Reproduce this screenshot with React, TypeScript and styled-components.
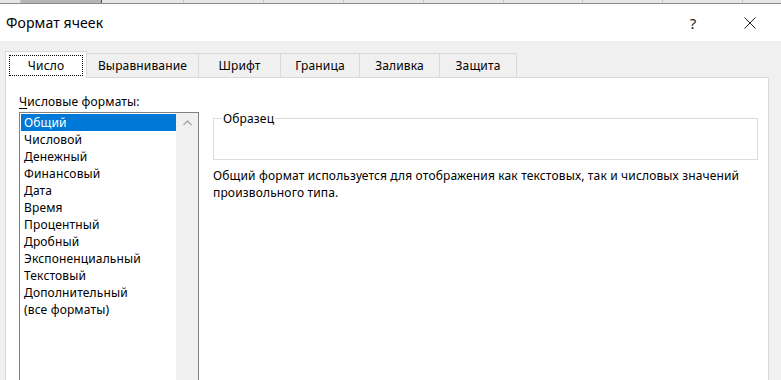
import styled, { createGlobalStyle } from 'styled-components'

const GlobalStyle = createGlobalStyle`
body {
  margin: 0;
  font-family: "Noto Sans", "Liberation Sans", sans-serif;
  color: #000;
}
`

const Window = styled.div`
width: 781px;
height: 380px;
overflow: hidden;
display: flex;
flex-direction: column;
background: #f0f0f0;
`

const SheetHeader = styled.div`
display: flex;
height: 3px;
flex-shrink: 0;
background: #e6e6e6;
border-bottom: 1px solid #8c8c8c;
`

const SheetCol = styled.div<{ $w: number; $active?: boolean }>`
width: ${p => p.$w}px;
flex-shrink: 0;
background: ${p => (p.$active ? '#b4b4b4' : '#e6e6e6')};
border-right: 1px solid ${p => (p.$active ? '#217346' : '#c8c8c8')};
`

const TitleBar = styled.div`
height: 37px;
flex-shrink: 0;
background: #fff;
display: flex;
align-items: center;
padding-left: 6px;
`

const Title = styled.div`
flex: 1;
font-size: 14px;
letter-spacing: 0.1px;
`

const HelpButton = styled.div`
width: 20px;
font-size: 15px;
text-align: center;
color: #222;
margin-right: 27px;
`

const CloseButton = styled.div`
width: 40px;
display: flex;
justify-content: center;
margin-right: 11px;
`

const Body = styled.div`
flex: 1;
display: flex;
flex-direction: column;
padding: 9px 12px 0 5px;
`

const TabRow = styled.div`
display: flex;
align-items: flex-end;
height: 27px;
`

const Tab = styled.div<{ $w: number; $active?: boolean }>`
width: ${p => p.$w}px;
height: ${p => (p.$active ? 27 : 24)}px;
box-sizing: border-box;
display: flex;
align-items: center;
justify-content: center;
font-size: 12px;
letter-spacing: 0.15px;
background: ${p => (p.$active ? '#fff' : '#f0f0f0')};
border: 1px solid #d9d9d9;
border-bottom: none;
border-left: ${p => (p.$active ? '1px solid #d9d9d9' : 'none')};
position: relative;
z-index: ${p => (p.$active ? 1 : 0)};
margin-bottom: ${p => (p.$active ? -1 : 0)}px;
`

const FocusRect = styled.span`
border: 1px dotted #000;
padding: 1px 18px;
`

const Panel = styled.div`
flex: 1;
background: #fff;
border: 1px solid #d9d9d9;
border-bottom: none;
display: grid;
grid-template-columns: 180px 545px;
column-gap: 14px;
padding: 15px 12px 0 13px;
letter-spacing: 0.15px;
`

const LeftCol = styled.div`
display: flex;
flex-direction: column;
`

const Label = styled.div`
font-size: 12px;
line-height: 17px;
& u {
  text-decoration: underline;
  text-underline-offset: 2px;
}
`

const ListBox = styled.div`
margin-top: 2px;
height: 300px;
border: 1px solid #828282;
display: flex;
padding: 1px 0 0 1px;
`

const Items = styled.div`
flex: 1;
`

const Item = styled.div<{ $selected?: boolean }>`
height: 17px;
line-height: 17px;
font-size: 12px;
padding-left: 3px;
background: ${p => (p.$selected ? '#0078d7' : 'transparent')};
color: ${p => (p.$selected ? '#fff' : '#000')};
`

const ScrollBar = styled.div`
width: 22px;
margin-top: -1px;
background: #f0f0f0;
display: flex;
justify-content: center;
padding-top: 7px;
`

const RightCol = styled.div`
padding-top: 17px;
`

const GroupBox = styled.fieldset`
margin: 0;
height: 50px;
box-sizing: border-box;
border: 1px solid #dcdcdc;
padding: 0 8px;
& legend {
  font-size: 12px;
  line-height: 17px;
  padding: 0 1px;
}
`

const Description = styled.p`
margin: 7px 0 0;
font-size: 12px;
line-height: 17px;
`

const formats = [
  'Общий',
  'Числовой',
  'Денежный',
  'Финансовый',
  'Дата',
  'Время',
  'Процентный',
  'Дробный',
  'Экспоненциальный',
  'Текстовый',
  'Дополнительный',
  '(все форматы)',
]

const tabs: [string, number][] = [
  ['Выравнивание', 112],
  ['Шрифт', 82],
  ['Граница', 79],
  ['Заливка', 80],
  ['Защита', 77],
]

const sheetCols = [20, 80, 81, 79, 79, 79, 79, 78, 79, 79, 79, 49]

const App = () => {
  return (
    <>
      <GlobalStyle />
      <Window>
        <SheetHeader>
          {sheetCols.map((w, idx) => (
            <SheetCol key={`col${idx}`} $w={w} $active={idx === 1} />
          ))}
        </SheetHeader>
        <TitleBar>
          <Title>Формат ячеек</Title>
          <HelpButton>?</HelpButton>
          <CloseButton>
            <svg width="12" height="12" viewBox="0 0 12 12">
              <path d="M0.5 0.5 L11.5 11.5 M11.5 0.5 L0.5 11.5" stroke="#222" strokeWidth="1" fill="none" />
            </svg>
          </CloseButton>
        </TitleBar>
        <Body>
          <TabRow>
            <Tab $w={82} $active>
              <FocusRect>Число</FocusRect>
            </Tab>
            {tabs.map(([name, w]) => (
              <Tab key={name} $w={w}>{name}</Tab>
            ))}
          </TabRow>
          <Panel>
            <LeftCol>
              <Label><u>Ч</u>исловые форматы:</Label>
              <ListBox>
                <Items>
                  {formats.map((f, idx) => (
                    <Item key={f} $selected={idx === 0}>{f}</Item>
                  ))}
                </Items>
                <ScrollBar>
                  <svg width="9" height="6" viewBox="0 0 9 6">
                    <path d="M0.5 5 L4.5 1 L8.5 5" stroke="#a6a6a6" strokeWidth="1.3" fill="none" />
                  </svg>
                </ScrollBar>
              </ListBox>
            </LeftCol>
            <RightCol>
              <GroupBox>
                <legend>Образец</legend>
              </GroupBox>
              <Description>
                Общий формат используется для отображения как текстовых, так и числовых значений произвольного типа.
              </Description>
            </RightCol>
          </Panel>
        </Body>
      </Window>
    </>
  )
}

export default App
